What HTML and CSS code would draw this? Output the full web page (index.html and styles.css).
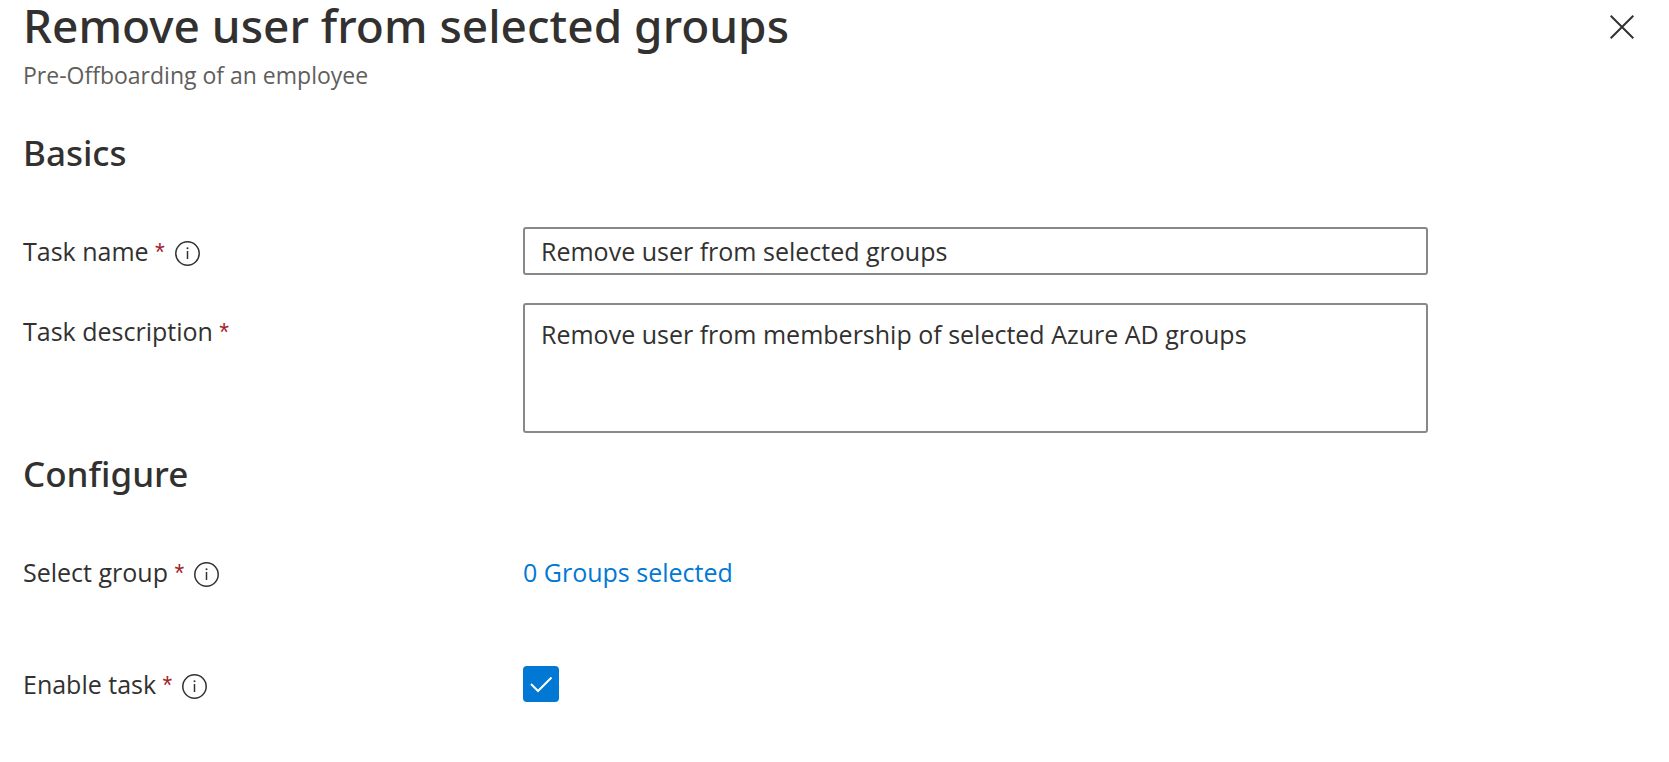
FILE: index.html
```html
<!DOCTYPE html>
<html lang="en">
<head>
<meta charset="utf-8">
<meta name="viewport" content="width=device-width, initial-scale=1">
<title>Remove user from selected groups</title>
<link rel="stylesheet" href="styles.css">
</head>
<body>
<main class="panel">
  <header class="panel-header">
    <div class="panel-heading">
      <h1 class="panel-title">Remove user from selected groups</h1>
      <p class="panel-subtitle">Pre-Offboarding of an employee</p>
    </div>
    <button class="icon-button" type="button" aria-label="Close">
      <svg class="close-icon" viewBox="0 0 24 24" aria-hidden="true"><path d="M.7.7 23.3 23.3M23.3.7.7 23.3"/></svg>
    </button>
  </header>
  <form class="form">
    <section class="section">
      <h2 class="section-title">Basics</h2>
      <div class="rows">
        <div class="row">
          <div class="label-cell">
            <label for="task-name">Task name <span class="required">*</span></label>
            <button class="icon-button" type="button" aria-label="About task name">
              <svg class="info-icon" viewBox="0 0 25 25" aria-hidden="true"><circle cx="12.5" cy="12.5" r="11.7"/><path d="M12.5 10V18"/><circle class="dot" cx="12.5" cy="7.3" r="1"/></svg>
            </button>
          </div>
          <input class="field" id="task-name" type="text" value="Remove user from selected groups">
        </div>
        <div class="row">
          <div class="label-cell label-cell-area">
            <label for="task-description">Task description <span class="required">*</span></label>
          </div>
          <textarea class="field field-area" id="task-description" rows="3">Remove user from membership of selected Azure AD groups</textarea>
        </div>
      </div>
    </section>
    <section class="section">
      <h2 class="section-title">Configure</h2>
      <div class="rows rows-loose">
        <div class="row">
          <div class="label-cell">
            <span id="group-label">Select group <span class="required">*</span></span>
            <button class="icon-button" type="button" aria-label="About select group">
              <svg class="info-icon" viewBox="0 0 25 25" aria-hidden="true"><circle cx="12.5" cy="12.5" r="11.7"/><path d="M12.5 10V18"/><circle class="dot" cx="12.5" cy="7.3" r="1"/></svg>
            </button>
          </div>
          <div class="value-cell"><a class="link" id="group-link" href="#" aria-labelledby="group-label group-link">0 Groups selected</a></div>
        </div>
        <div class="row">
          <div class="label-cell">
            <label for="enable-task">Enable task <span class="required">*</span></label>
            <button class="icon-button" type="button" aria-label="About enable task">
              <svg class="info-icon" viewBox="0 0 25 25" aria-hidden="true"><circle cx="12.5" cy="12.5" r="11.7"/><path d="M12.5 10V18"/><circle class="dot" cx="12.5" cy="7.3" r="1"/></svg>
            </button>
          </div>
          <div class="value-cell">
            <span class="checkbox">
              <input class="checkbox-input" id="enable-task" type="checkbox" checked>
              <svg class="check-icon" viewBox="0 0 36 36" aria-hidden="true"><path d="M8 18 15 25 28.5 11.5"/></svg>
            </span>
          </div>
        </div>
      </div>
    </section>
  </form>
</main>
</body>
</html>
```
FILE: styles.css
```css
* {
  box-sizing: border-box;
}

body {
  margin: 0;
  background: #fff;
  color: #323130;
  font-family: "Segoe UI", "Open Sans", "Noto Sans", sans-serif;
  font-size: 25px;
  line-height: 48px;
}

.panel {
  padding: 0 35px 48px 23px;
}

.panel-header {
  display: flex;
  justify-content: space-between;
  align-items: flex-start;
}

.panel-title,
.section-title {
  font-family: "Segoe UI", "Noto Sans", sans-serif;
  font-weight: 500;
}

.panel-title {
  margin: 0 0 8px;
  font-size: 46px;
  line-height: 50px;
}

.panel-subtitle {
  margin: 0;
  color: #605e5c;
  font-size: 23px;
  line-height: 34px;
}

.icon-button {
  display: flex;
  padding: 0;
  border: 0;
  background: none;
  color: inherit;
  cursor: pointer;
}

.close-icon {
  width: 24px;
  height: 24px;
  margin-top: 15px;
  fill: none;
  stroke: currentColor;
  stroke-width: 2;
}

.form {
  padding: 37px 206px 0 0;
}

.section + .section {
  margin-top: 17px;
}

.section-title {
  margin: 0 0 50px;
  font-size: 35px;
  line-height: 48px;
}

.rows {
  display: grid;
  gap: 27px;
}

.rows-loose {
  gap: 63px;
}

.row {
  display: grid;
  grid-template-columns: 500px minmax(0, 1fr);
  align-items: start;
}

.label-cell {
  display: flex;
  align-items: center;
  gap: 10px;
}

.label-cell-area {
  padding-top: 4px;
}

.required {
  color: #a4262c;
  font-family: "Segoe UI", "Liberation Sans", sans-serif;
}

.info-icon {
  width: 25px;
  height: 25px;
  margin-top: 4px;
  fill: none;
  stroke: currentColor;
  stroke-width: 1.5;
}

.info-icon .dot {
  fill: currentColor;
  stroke: none;
}

.field {
  display: block;
  width: 100%;
  height: 48px;
  margin: 0;
  padding: 0 16px;
  border: 2px solid #8a8886;
  border-radius: 3px;
  background: #fff;
  color: inherit;
  font: inherit;
}

.field-area {
  height: 130px;
  padding: 11px 16px;
  line-height: 36px;
  resize: none;
}

.value-cell {
  display: flex;
  align-items: center;
  min-height: 48px;
}

.link {
  color: #0078d4;
  text-decoration: none;
}

.checkbox {
  display: grid;
  width: 36px;
  height: 36px;
}

.checkbox-input,
.check-icon {
  grid-area: 1 / 1;
  width: 36px;
  height: 36px;
  margin: 0;
}

.checkbox-input {
  appearance: none;
  border: 2px solid #323130;
  border-radius: 4px;
}

.checkbox-input:checked {
  border-color: #0078d4;
  background: #0078d4;
}

.check-icon {
  fill: none;
  stroke: #fff;
  stroke-width: 2;
  pointer-events: none;
}

.checkbox-input:not(:checked) + .check-icon {
  visibility: hidden;
}
```
